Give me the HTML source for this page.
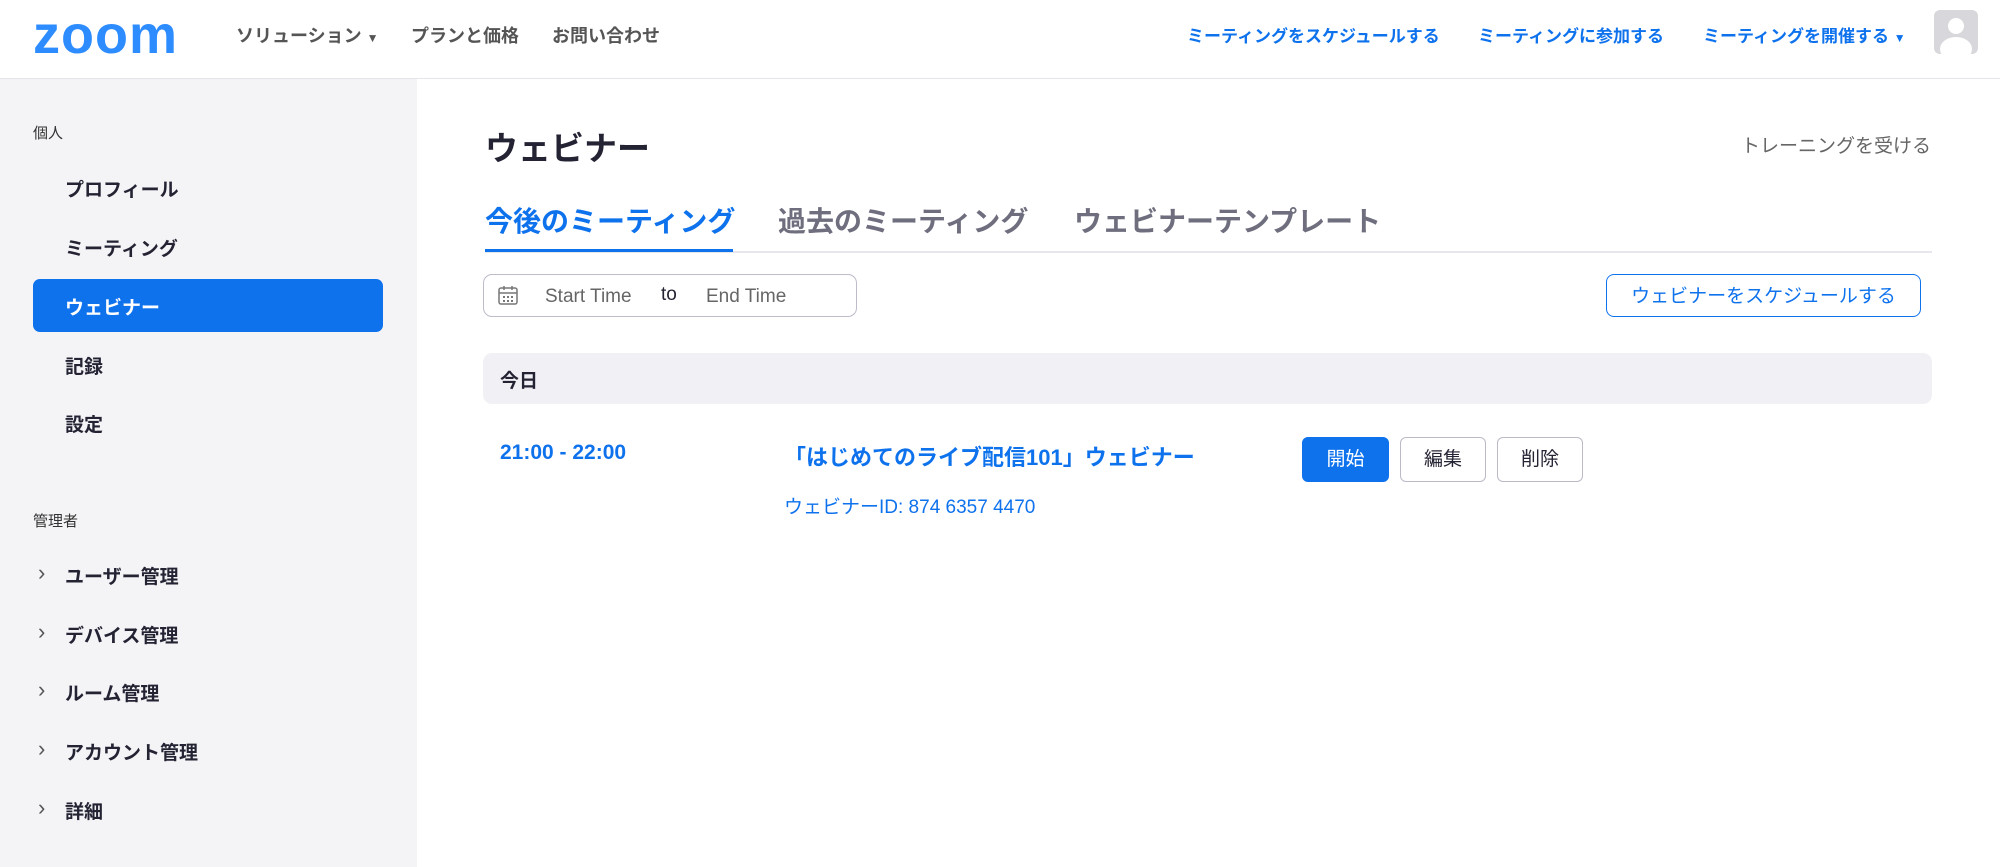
<!DOCTYPE html>
<html><head><meta charset="utf-8"><style>
*{margin:0;padding:0;box-sizing:border-box}
body{width:2000px;height:867px;overflow:hidden;background:#fff;font-family:"Liberation Sans","Noto Sans CJK JP",sans-serif;color:#232333;position:relative}
.a{position:absolute;white-space:nowrap}
.hdr{position:absolute;left:0;top:0;width:2000px;height:79px;border-bottom:1px solid #e4e4ea;background:#fff}
.nav{font-size:18px;color:#555;font-weight:bold;top:22px}
.rnav{font-size:17px;color:#0e72ed;font-weight:bold;top:22px}
.side{position:absolute;left:0;top:79px;width:417px;height:788px;background:#f4f4f7}
.si{font-size:19px;font-weight:bold;left:65px}
.sh{font-size:15px;left:33px;color:#333}
.chev{left:38px;font-size:22px;color:#555;margin-top:-2px}
.blue{color:#0e72ed}
.btn{position:absolute;height:45px;border-radius:6px;font-size:19px;text-align:center;line-height:43px;border:1px solid #bbbbc8;color:#232333;background:#fff}
</style></head><body>
<div class="hdr"></div>
<div class="a" style="left:33px;top:4px;font-size:54px;font-weight:bold;color:#2d8cff;letter-spacing:1px;font-family:'Liberation Sans',sans-serif;line-height:62px">zoom</div>
<div class="a nav" style="left:236px">ソリューション <span style="font-size:12px">▼</span></div>
<div class="a nav" style="left:411px">プランと価格</div>
<div class="a nav" style="left:552px">お問い合わせ</div>
<div class="a rnav" style="left:1187px">ミーティングをスケジュールする</div>
<div class="a rnav" style="left:1478px">ミーティングに参加する</div>
<div class="a rnav" style="left:1703px">ミーティングを開催する <span style="font-size:12px">▼</span></div>
<div class="a" style="left:1934px;top:10px;width:44px;height:44px;border-radius:6px;background:#d8d8dc;overflow:hidden">
<div style="position:absolute;left:14px;top:8px;width:16px;height:16px;border-radius:50%;background:#fff"></div>
<div style="position:absolute;left:6px;top:27px;width:32px;height:24px;border-radius:50%;background:#fff"></div></div>

<div class="side"></div>
<div class="a sh" style="top:122px">個人</div>
<div class="a si" style="top:175px">プロフィール</div>
<div class="a si" style="top:234px">ミーティング</div>
<div class="a" style="left:33px;top:279px;width:350px;height:53px;background:#0e72ed;border-radius:7px"></div>
<div class="a si" style="top:293px;color:#fff">ウェビナー</div>
<div class="a si" style="top:352px">記録</div>
<div class="a si" style="top:410px">設定</div>
<div class="a sh" style="top:510px">管理者</div>
<div class="a chev" style="top:562px">›</div><div class="a si" style="top:562px">ユーザー管理</div>
<div class="a chev" style="top:621px">›</div><div class="a si" style="top:621px">デバイス管理</div>
<div class="a chev" style="top:679px">›</div><div class="a si" style="top:679px">ルーム管理</div>
<div class="a chev" style="top:738px">›</div><div class="a si" style="top:738px">アカウント管理</div>
<div class="a chev" style="top:797px">›</div><div class="a si" style="top:797px">詳細</div>

<div class="a" style="left:485px;top:122px;font-size:33px;font-weight:bold">ウェビナー</div>
<div class="a" style="left:1741px;top:131px;font-size:19px;color:#666">トレーニングを受ける</div>
<div class="a" style="left:485px;width:1447px;height:2px;background:#e6e6ec;top:251px"></div>
<div class="a blue" style="left:485px;top:200px;font-size:28px;font-weight:bold">今後のミーティング</div>
<div class="a" style="left:485px;top:249px;width:248px;height:3px;background:#0e72ed"></div>
<div class="a" style="left:778px;top:200px;font-size:28px;font-weight:bold;color:#6e6e7e">過去のミーティング</div>
<div class="a" style="left:1074px;top:200px;font-size:28px;font-weight:bold;color:#6e6e7e">ウェビナーテンプレート</div>

<div class="a" style="left:483px;top:274px;width:374px;height:43px;border:1.5px solid #bcbcca;border-radius:9px"></div>
<svg class="a" style="left:497px;top:284px" width="22" height="22" viewBox="0 0 22 22" fill="none" stroke="#777" stroke-width="1.5"><rect x="2" y="4" width="18" height="16" rx="2"/><path d="M2 9h18M7 2v4M15 2v4"/><g fill="#777" stroke="none"><rect x="6" y="12" width="2" height="2"/><rect x="10" y="12" width="2" height="2"/><rect x="14" y="12" width="2" height="2"/><rect x="6" y="16" width="2" height="2"/><rect x="10" y="16" width="2" height="2"/><rect x="14" y="16" width="2" height="2"/></g></svg>
<div class="a" style="left:545px;top:286px;font-size:19px;color:#666">Start Time</div>
<div class="a" style="left:661px;top:284px;font-size:19px;color:#232333">to</div>
<div class="a" style="left:706px;top:286px;font-size:19px;color:#666">End Time</div>
<div class="a blue" style="left:1606px;top:274px;width:315px;height:43px;border:1.5px solid #0e72ed;border-radius:8px;font-size:19px;text-align:center;line-height:43px">ウェビナーをスケジュールする</div>

<div class="a" style="left:483px;top:353px;width:1449px;height:51px;background:#f1f1f5;border-radius:9px"></div>
<div class="a" style="left:500px;top:366px;font-size:19px;font-weight:bold">今日</div>
<div class="a blue" style="left:500px;top:441px;font-size:21px;font-weight:bold">21:00 - 22:00</div>
<div class="a blue" style="left:784px;top:440px;font-size:22px;font-weight:bold">「はじめてのライブ配信101」ウェビナー</div>
<div class="a blue" style="left:784px;top:492px;font-size:19px">ウェビナーID: 874 6357 4470</div>
<div class="btn" style="left:1302px;top:437px;width:87px;background:#0e72ed;border-color:#0e72ed;color:#fff">開始</div>
<div class="btn" style="left:1400px;top:437px;width:86px">編集</div>
<div class="btn" style="left:1497px;top:437px;width:86px">削除</div>
</body></html>
